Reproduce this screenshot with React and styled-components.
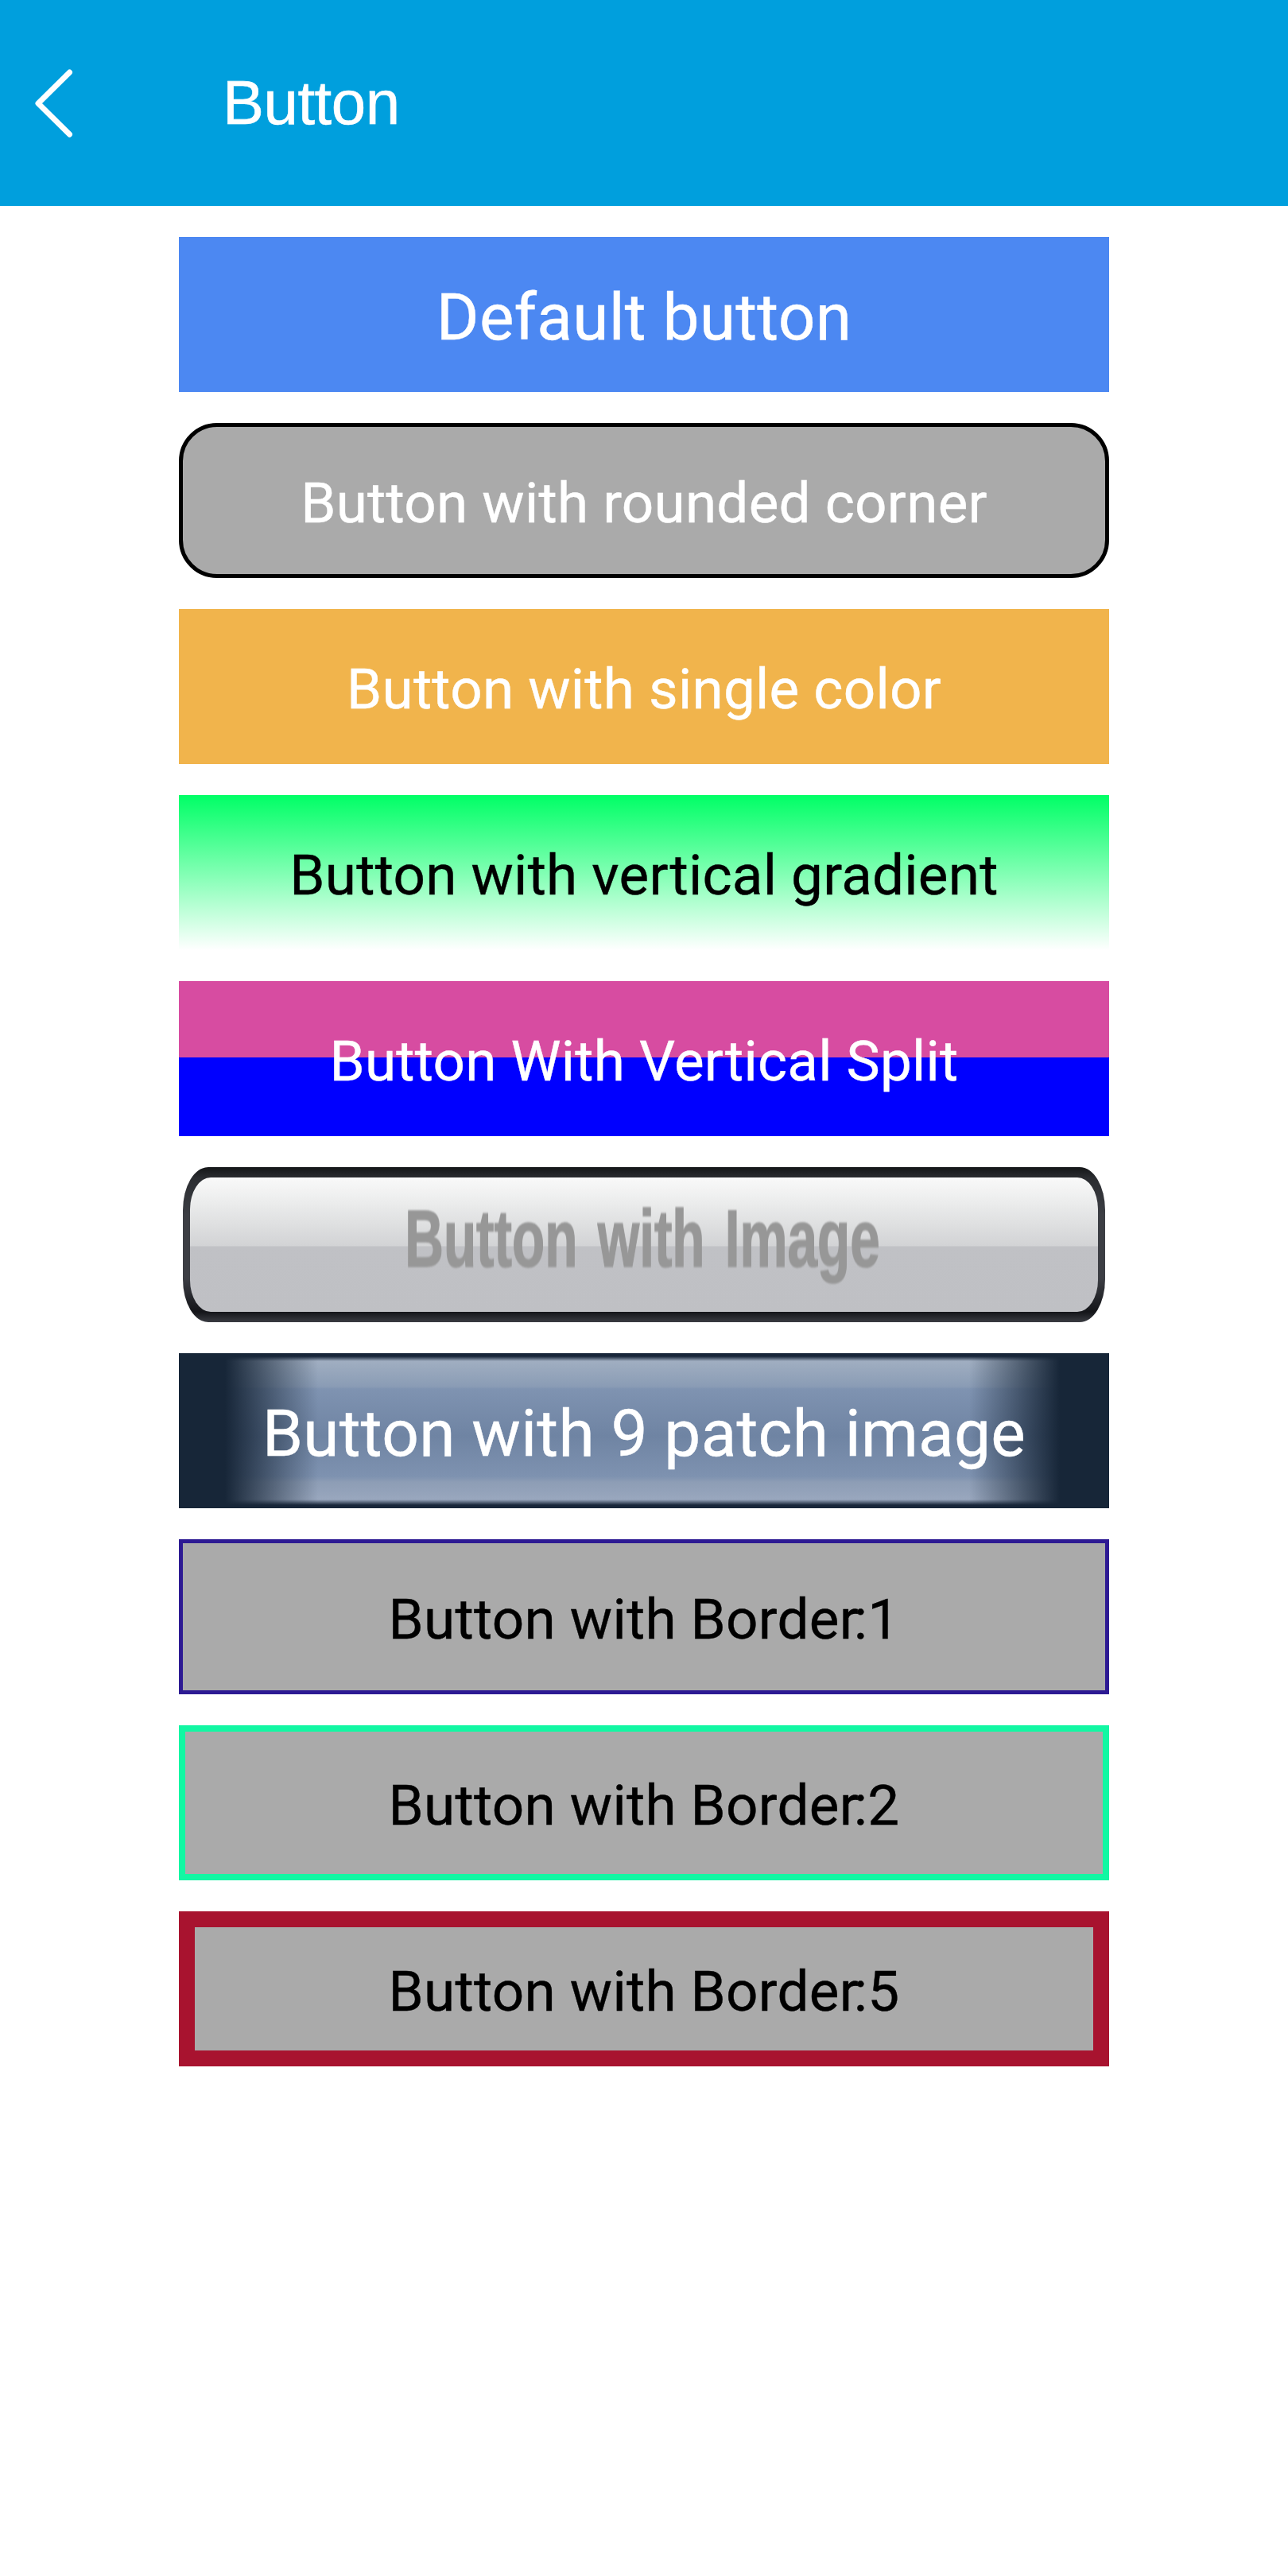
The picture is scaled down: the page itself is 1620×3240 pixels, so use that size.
import React from 'react';
import styled, { createGlobalStyle } from 'styled-components';

const GlobalStyle = createGlobalStyle`
  body { margin: 0; background: #fff; }
`;

const Screen = styled.div`
  width: 1620px;
  height: 3240px;
  background: #fff;
  display: flex;
  flex-direction: column;
`;

const Header = styled.header`
  height: 259px;
  flex: none;
  background: #009fdd;
  display: flex;
  align-items: center;
  padding-left: 42px;
`;

const BackIcon = styled.svg`
  display: block;
  width: 52px;
  height: 90px;
  fill: none;
  stroke: #fff;
  stroke-width: 7;
  stroke-linecap: round;
  stroke-linejoin: round;
`;

const Title = styled.h1`
  margin: 0 0 1px 186px;
  font: 400 78px/90px "Liberation Sans", Arial, sans-serif;
  letter-spacing: -0.5px;
  -webkit-text-stroke: 0.6px currentColor;
  color: #fff;
`;

const List = styled.main`
  display: flex;
  flex-direction: column;
  gap: 39px;
  padding: 39px 225px 0;
`;

const Button = styled.button`
  box-sizing: border-box;
  appearance: none;
  display: flex;
  align-items: center;
  justify-content: center;
  height: 195px;
  width: 100%;
  margin: 0;
  padding: 6px 0 0;
  border: ${(p) => (p.$border ? `${p.$border}px solid ${p.$borderColor}` : 'none')};
  border-radius: ${(p) => p.$radius || 0}px;
  background: ${(p) => p.$bg};
  color: ${(p) => p.$color || '#fff'};
  font: 400 ${(p) => (p.$large ? 82 : 71)}px/100px Roboto, sans-serif;
  letter-spacing: 0.25px;
  -webkit-text-stroke: 0.4px currentColor;
  white-space: pre;
`;

const Kern = styled.span`
  letter-spacing: -6px;
`;

const GlossyButton = styled(Button)`
  width: 1160px;
  margin: 0 5px;
  padding: 13px 9px;
  border-radius: 32px / 54px;
  background: linear-gradient(#141618 0, #2b2d31 14px, #3c3e44 60px, #3c3e44 140px, #141519 182px, #3a3c42 195px);
`;

const GlossyFace = styled.span`
  box-sizing: border-box;
  display: flex;
  align-items: center;
  justify-content: center;
  width: 100%;
  height: 100%;
  padding: 0 4px 16px 0;
  border-radius: 26px / 40px;
  background: linear-gradient(#f9f9f9 0, #ebecec 32px, #d2d3d5 86px, #c0c1c5 87px, #bfc0c4 100%);
`;

const GlossyLabel = styled.span`
  font: 700 102px/100px "Liberation Sans", Arial, sans-serif;
  letter-spacing: 0;
  word-spacing: 10px;
  color: #979797;
  -webkit-text-stroke: 1.5px currentColor;
  transform: scaleX(0.661);
  filter: blur(1px);
`;

const PatchButton = styled(Button)`
  background:
    linear-gradient(90deg, #172638 0, #172638 58px, transparent 175px, transparent 994px, #172638 1108px, #172638 100%),
    linear-gradient(#18263a 0, #18263a 4px, #a0aec1 10px, #8a9cb5 42px, #7f93b1 45px, #6f84a3 104px, #7e92b0 155px, #8d9db5 162px, #99a7be 184px, #18263a 191px, #18263a 195px);
`;

const borders = [
  { label: '1', width: 5, color: '#2d1a93' },
  { label: '2', width: 8, color: '#12f7a3' },
  { label: '5', width: 20, color: '#a8132f' },
];

export default function App() {
  return (
    <Screen>
      <GlobalStyle />
      <Header>
        <BackIcon viewBox="0 0 52 90">
          <path d="M45.5 6 L6 45 L45.5 84" />
        </BackIcon>
        <Title>Button</Title>
      </Header>
      <List>
        <Button $bg="#4c88f2" $large>Default button</Button>
        <Button $bg="#aaa" $border={5} $borderColor="#000" $radius={48}>Button with rounded corner</Button>
        <Button $bg="#f1b44c">Button with single color</Button>
        <Button $bg="linear-gradient(#00ff66, #fff)" $color="#000">Button with vertical gradient</Button>
        <Button $bg="linear-gradient(#d74ca1 96px, #00f 96px)">Button With Vertical Split</Button>
        <GlossyButton>
          <GlossyFace>
            <GlossyLabel>Button with Image</GlossyLabel>
          </GlossyFace>
        </GlossyButton>
        <PatchButton $large>Button with 9 patch image</PatchButton>
        {borders.map((b) => (
          <Button key={b.label} $bg="#aaa" $border={b.width} $borderColor={b.color} $color="#000">
            <span>Button with Borde<Kern>r</Kern>:{b.label}</span>
          </Button>
        ))}
      </List>
    </Screen>
  );
}
